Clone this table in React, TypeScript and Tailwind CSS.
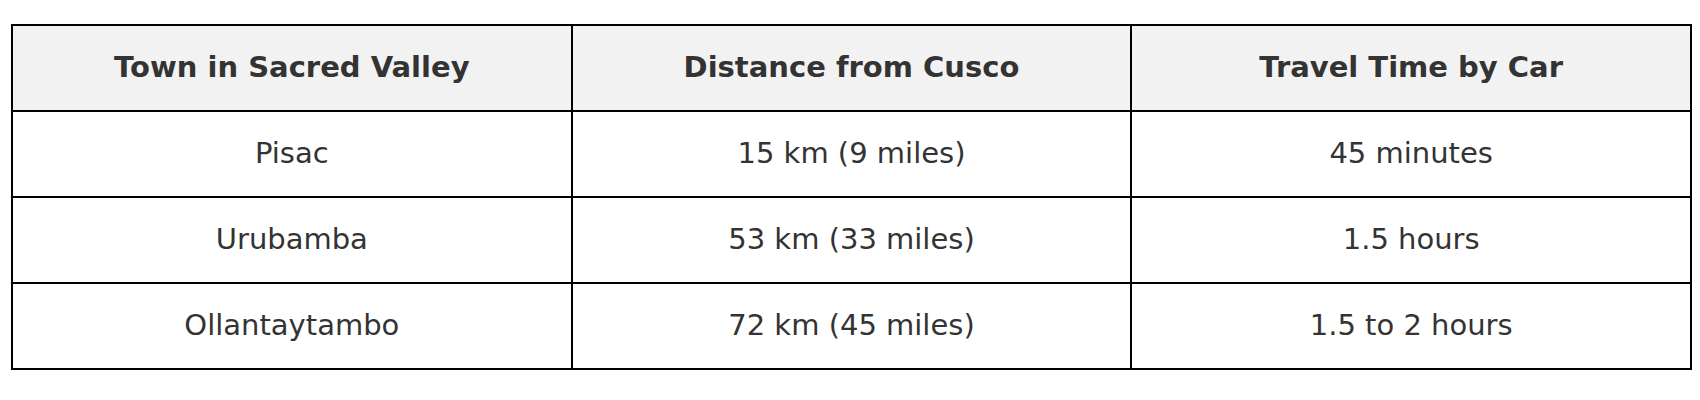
const rows = [
  ["Pisac", "15 km (9 miles)", "45 minutes"],
  ["Urubamba", "53 km (33 miles)", "1.5 hours"],
  ["Ollantaytambo", "72 km (45 miles)", "1.5 to 2 hours"],
];

export default function App() {
  return (
    <div className="w-[1700px] h-[400px] bg-white pt-[24px] pl-[11px] font-['DejaVu_Sans',sans-serif] text-[#333333]">
      <table className="w-[1681px] border-collapse table-fixed text-[29px]">
        <thead>
          <tr className="h-[86px] bg-[#f2f2f2]">
            <th className="border-2 border-black font-bold text-center">Town in Sacred Valley</th>
            <th className="border-2 border-black font-bold text-center">Distance from Cusco</th>
            <th className="border-2 border-black font-bold text-center">Travel Time by Car</th>
          </tr>
        </thead>
        <tbody>
          {rows.map((r) => (
            <tr key={r[0]} className="h-[86px]">
              {r.map((c) => (
                <td key={c} className="border-2 border-black text-center">
                  {c}
                </td>
              ))}
            </tr>
          ))}
        </tbody>
      </table>
    </div>
  );
}
